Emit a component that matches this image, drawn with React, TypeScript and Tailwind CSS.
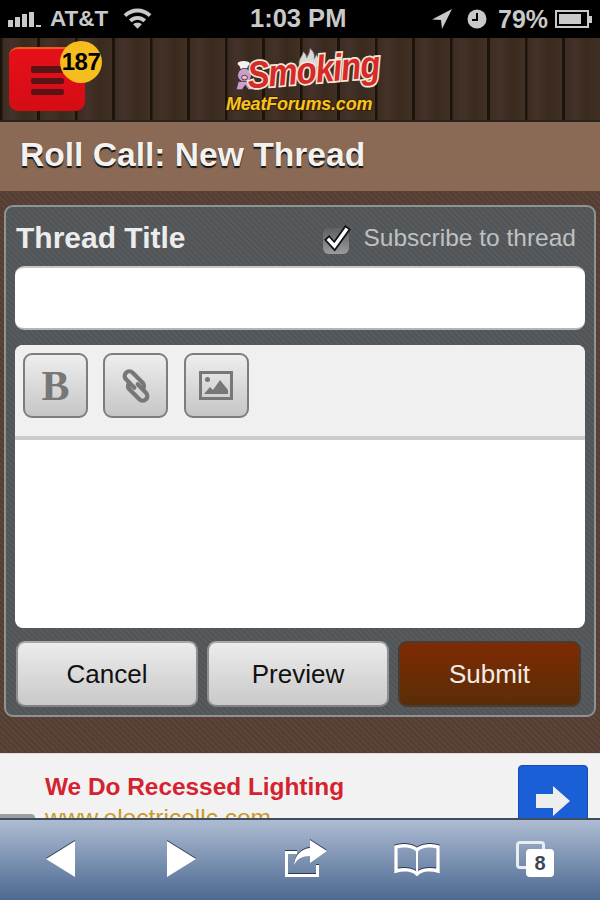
import React from 'react';

function StatusBar() {
  return (
    <div className="h-[38px] bg-black flex items-center text-[#c9c9c9] font-bold">
      {/* signal */}
      <div className="flex items-end gap-[2px] ml-[8px] h-[16px]">
        <div className="w-[5px] h-[7px] bg-[#c9c9c9]" />
        <div className="w-[5px] h-[10px] bg-[#c9c9c9]" />
        <div className="w-[5px] h-[13px] bg-[#c9c9c9]" />
        <div className="w-[5px] h-[15px] bg-[#c9c9c9]" />
        <div className="w-[5px] h-[2px] bg-[#c9c9c9]" />
      </div>
      <span className="text-[22.500px] leading-none ml-[9px] w-[57px] whitespace-nowrap">AT&amp;T</span>
      <svg className="ml-[16px] -mt-[2px]" width="29" height="22" viewBox="0 0 30 22" fill="none" stroke="#c9c9c9" strokeWidth="4">
        <path d="M2 8.500C9.500 1.500 20.500 1.500 28 8.500" />
        <path d="M7.500 14c4.500-4 10.500-4 15 0" />
        <path d="M15 22l-4.500-4.500c2.500-2 6.500-2 9 0z" fill="#c9c9c9" stroke="none" />
      </svg>
      <span className="text-[25.500px] leading-none ml-[98px] w-[120px] whitespace-nowrap">1:03 PM</span>
      <svg className="ml-[61px]" width="22" height="22" viewBox="0 0 22 22" fill="#c9c9c9">
        <path d="M21 1L1 11.500l9 .5 1 9z" />
      </svg>
      <svg className="ml-[14px]" width="20" height="20" viewBox="0 0 20 20">
        <circle cx="10" cy="10" r="9.500" fill="#c9c9c9" />
        <path d="M10 4v7H5" fill="none" stroke="#000" strokeWidth="2" />
      </svg>
      <span className="text-[25px] leading-none ml-[11px] w-[50px] whitespace-nowrap">79%</span>
      <div className="ml-[7px] w-[34px] h-[18px] border-2 border-[#c9c9c9] p-[2px]">
        <div className="h-full w-[22px] bg-[#c9c9c9]" />
      </div>
      <div className="w-[3px] h-[7px] bg-[#c9c9c9]" />
    </div>
  );
}

function Logo() {
  return (
    <div className="relative w-[160px] h-[72px] ml-[140px] -mt-[2px] font-['Liberation_Sans',sans-serif]">
      {/* flames */}
      <svg className="absolute left-[72px] top-[0px]" width="26" height="26" viewBox="0 0 38 30" fill="#d8d8d8" stroke="#777" strokeWidth="1">
        <path d="M4 28C0 18 8 14 9 6c4 3 5 6 5 9 2-4 5-8 5-14 6 5 7 10 6 15 2-2 3-4 3-6 5 6 6 14 2 18z" />
      </svg>
      {/* pig */}
      <svg className="absolute left-[8px] top-[13px]" width="23" height="36" viewBox="0 0 30 44">
        <path d="M8 8h12l-2 5h-8z" fill="#f2f2f2" />
        <ellipse cx="14" cy="6" rx="8" ry="3.500" fill="#f2f2f2" />
        <circle cx="15" cy="21" r="9" fill="#c9a0c8" stroke="#3a2030" strokeWidth="1" />
        <ellipse cx="15" cy="24" rx="4" ry="3" fill="#e8b8d0" stroke="#3a2030" strokeWidth="1" />
        <path d="M7 29h16l3 11h-6l-4-6-4 6H4z" fill="#c9a0c8" stroke="#3a2030" strokeWidth="1" />
      </svg>
      <div className="absolute left-[22px] top-[8px] -rotate-[5deg] scale-y-115 text-[33px] leading-none font-bold italic tracking-[-1px] text-[#d92a2a] [-webkit-text-stroke:3px_#f1ead8] [paint-order:stroke_fill] whitespace-nowrap">
        Smoking
      </div>
      <div className="absolute left-[1px] top-[50px] text-[18px] leading-none font-bold italic tracking-[-0.2px] text-[#f4c51f] [-webkit-text-stroke:2px_#3a1d08] [paint-order:stroke_fill] whitespace-nowrap">
        MeatForums.com
      </div>
    </div>
  );
}

function Header() {
  return (
    <div className="h-[84px] flex items-start pt-[9px] pl-[9px] border-b-2 border-[#2a2420] bg-[#3d2c20] bg-[repeating-linear-gradient(90deg,#1c130d_0,#1c130d_2px,#3d2c20_3px,#44322a_12px,#3a2a1e_24px,#413024_37.500px)]">
      <div className="relative w-[76px] h-[64px] rounded-[9px] border-t-2 border-[#f4581c] bg-gradient-to-b from-[#e6101a] to-[#d40c14] flex flex-col items-center justify-center gap-[5px]">
        <div className="w-[33px] h-[7px] rounded-[2px] bg-[#5a1418]" />
        <div className="w-[33px] h-[6px] rounded-[2px] bg-[#5a1418]" />
        <div className="w-[33px] h-[6px] rounded-[2px] bg-[#5a1418]" />
        <div className="absolute -right-[17px] -top-[8px] w-[42px] h-[42px] rounded-full bg-[#f6bd1f] text-black font-bold text-[24px] tracking-[-0.5px] flex items-center justify-center">
          187
        </div>
      </div>
      <Logo />
    </div>
  );
}

function ToolButton({ children }: { children: React.ReactNode }) {
  return (
    <div className="w-[65px] h-[65px] rounded-[9px] border-2 border-[#7d7d7d] bg-gradient-to-b from-[#eeeeee] to-[#c6c6c6] flex items-center justify-center">
      {children}
    </div>
  );
}

function ActionButton({ label }: { label: string }) {
  return (
    <div className="w-[182px] h-[66px] rounded-[9px] border-2 border-t-[#a4a7a8] border-x-[#8d9092] border-b-[#7f8284] bg-gradient-to-b from-[#ececec] to-[#c9c9c9] text-[#111] text-[26px] flex items-center justify-center">
      {label}
    </div>
  );
}

function Form() {
  return (
    <div className="h-[562px] pt-[14px] pl-[4px] pr-[4px] bg-[#583f34] bg-[repeating-linear-gradient(45deg,#5c4438_0,#5c4438_2px,#543d32_2px,#543d32_4px)]">
      <div className="h-[512px] rounded-[9px] border-2 border-[#8f9293] px-[9px] bg-[#54585b] bg-[repeating-linear-gradient(45deg,#575b5e_0,#575b5e_2px,#515558_2px,#515558_4px)]">
        <div className="h-[59px] flex items-center justify-between pt-[4px] pr-[9px] pl-[1px]">
          <span className="text-[30px] font-bold text-[#ececec] -mt-[2px]">Thread Title</span>
          <div className="flex items-center gap-[15px]">
            <div className="relative w-[26px] h-[26px] rounded-[6px] bg-gradient-to-b from-[#5d6163] to-[#9a9c9d] mt-[4px]">
              <svg className="absolute -top-[3px] left-[0px]" width="28" height="28" viewBox="0 0 28 28" fill="none" strokeLinecap="square">
                <path d="M6 15l5.500 6L23 5" stroke="#111" strokeWidth="7" />
                <path d="M6 15l5.500 6L23 5" stroke="#fff" strokeWidth="3.500" />
              </svg>
            </div>
            <span className="text-[24.500px] text-[#bfc1c2]">Subscribe to thread</span>
          </div>
        </div>
        <div className="h-[64px] rounded-[9px] bg-white border-t-2 border-b-2 border-t-[#c8c8c8] border-b-[#b5b5b5]" />
        <div className="mt-[15px] h-[283px] rounded-[8px] bg-white overflow-hidden">
          <div className="h-[95px] bg-[#f0f0f0] border-b-4 border-[#cccccc] flex gap-[15.300px] pl-[8px] pt-[8px]">
            <ToolButton>
              <span className="font-['Liberation_Serif',serif] font-bold text-[42px] leading-none text-[#777]">B</span>
            </ToolButton>
            <ToolButton>
              <svg width="40" height="40" viewBox="0 0 34 34" fill="none" stroke="#777" strokeWidth="3.600" strokeLinecap="round">
                <g transform="rotate(45 17 17)">
                  <path d="M17 19H7a4 4 0 0 1 0-8h12a4 4 0 0 1 4 4" />
                  <path d="M17 15h10a4 4 0 0 1 0 8H15a4 4 0 0 1-4-4" />
                </g>
              </svg>
            </ToolButton>
            <ToolButton>
              <svg width="34" height="30" viewBox="0 0 34 30">
                <rect x="1.500" y="1.500" width="31" height="26" fill="none" stroke="#777" strokeWidth="3" />
                <circle cx="8.500" cy="8.500" r="2.500" fill="#777" />
                <path d="M5 23l6-7 3 3 7-10 8 10v4z" fill="#777" />
              </svg>
            </ToolButton>
          </div>
        </div>
        <div className="mt-[13px] flex gap-[9px] pl-[1px]">
          <ActionButton label="Cancel" />
          <ActionButton label="Preview" />
          <div className="w-[183px] h-[66px] rounded-[9px] border-2 border-[#4a3a30] bg-gradient-to-b from-[#7f2a04] to-[#5a2d06] text-[#f2ece4] text-[26px] flex items-center justify-center">
            Submit
          </div>
        </div>
      </div>
    </div>
  );
}

function Ad() {
  return (
    <div className="h-[65px] overflow-hidden bg-[#f2f2f2] border-t border-[#ddd] relative pl-[45px] pt-[18px]">
      <div className="text-[24.400px] leading-[30px] font-bold text-[#d6212e]">We Do Recessed Lighting</div>
      <div className="text-[24.500px] leading-[30px] text-[#c8992c] mt-[1px]">www.electricollc.com</div>
      <div className="absolute left-[518px] top-[11px] w-[70px] h-[70px] rounded-[4px] bg-[#1b5fd6] border border-[#154db0] pt-[20px] pl-[17px]">
        <svg width="34" height="30" viewBox="0 0 34 30" fill="#eeeeee">
          <path d="M0 8h17V0l17 15-17 15v-8H0z" />
        </svg>
      </div>
      <div className="absolute left-0 bottom-0 w-[35px] h-[4px] rounded-tr-[6px] bg-[#9a9ea3]" />
    </div>
  );
}

function BottomBar() {
  return (
    <div className="h-[82px] border-t-2 border-[#3e4d60] bg-gradient-to-b from-[#aebcd2] to-[#4c6991] flex items-center pl-[46px] pb-[2px]">
      <svg className="drop-shadow-[0_-1px_0_#2c3a50]" width="29" height="36" viewBox="0 0 29 36" fill="#fff"><path d="M29 0v36L0 18z" /></svg>
      <svg className="ml-[92px] drop-shadow-[0_-1px_0_#2c3a50]" width="29" height="36" viewBox="0 0 29 36" fill="#fff"><path d="M0 0v36l29-18z" /></svg>
      <svg className="ml-[87px] -mt-[2px] drop-shadow-[0_-1px_0_#2c3a50]" width="45" height="38" viewBox="0 0 45 38" fill="none">
        <path d="M2 12h12v3H5v20h28v-9h3v12H2z" fill="#fff" />
        <path d="M27 1l17 11-17 12v-7c-8 0-13 3-16 9 1-10 7-16 16-17z" fill="#fff" />
      </svg>
      <svg className="ml-[66px] mt-[2px] drop-shadow-[0_-1px_0_#2c3a50]" width="46" height="32" viewBox="0 0 46 32" fill="none" stroke="#fff" strokeWidth="3.500">
        <path d="M23 6C18 1 8 1 2 3v24c7-2 16-2 21 3 5-5 14-5 21-3V3c-6-2-16-2-21 3z" />
        <path d="M23 6v22" strokeWidth="2" />
      </svg>
      <div className="relative ml-[76px] w-[38px] h-[36px]">
        <div className="absolute left-0 top-0 w-[29px] h-[28px] rounded-[4px] border-[3px] border-[#e8edf3]" />
        <div className="absolute left-[10px] top-[8px] w-[28px] h-[28px] rounded-[4px] bg-white text-[#3b4656] font-bold text-[20px] leading-none flex items-center justify-center">
          8
        </div>
      </div>
    </div>
  );
}

export default function App() {
  return (
    <div className="w-[600px] h-[900px] overflow-hidden font-['Liberation_Sans',Arial,sans-serif]">
      <StatusBar />
      <Header />
      <div className="h-[69px] bg-[#8a6a55] flex items-center pl-[20px] pb-[3px]">
        <h1 className="text-[33.600px] font-bold text-[#f4f2ef] [text-shadow:0_2px_1px_#111]">Roll Call: New Thread</h1>
      </div>
      <Form />
      <Ad />
      <BottomBar />
    </div>
  );
}
